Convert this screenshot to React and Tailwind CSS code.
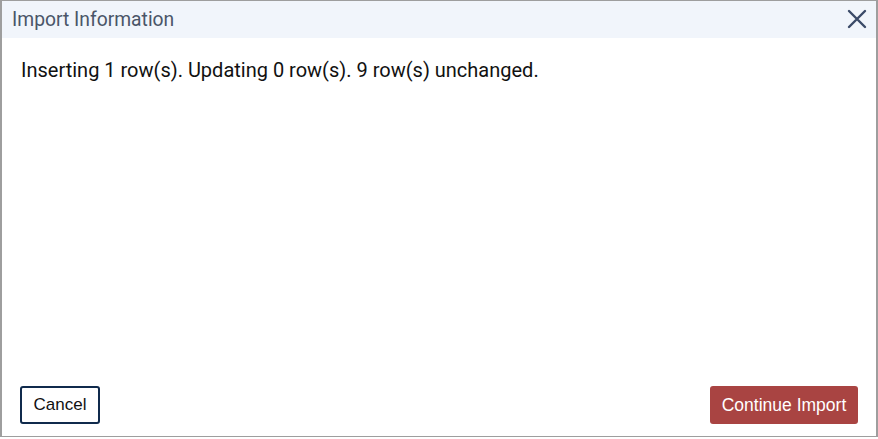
export default function App() {
  return (
    <div className="w-[878px] h-[439px] bg-white overflow-hidden">
      <div className="w-[878px] h-[437px] flex flex-col border-t border-b border-l-2 border-r-2 border-[#9e9e9e] bg-white">
        <div className="h-[37px] shrink-0 bg-[#f1f5fb] flex items-center justify-between pl-[10px] pr-[8px]">
          <span className="text-[19.3px] text-[#4a5568] font-['Roboto',sans-serif] leading-none">Import Information</span>
          <svg width="22" height="22" viewBox="0 0 22 22" className="mt-[-1px]">
            <path d="M3 3 L19 19 M19 3 L3 19" stroke="#3b4a68" strokeWidth="2.4" strokeLinecap="round" fill="none" />
          </svg>
        </div>
        <div className="flex-1 flex flex-col px-[19px]">
          <p className="mt-[20px] text-[20px] text-[#111] font-['Roboto',sans-serif] leading-[24px]">
            Inserting 1 row(s). Updating 0 row(s). 9 row(s) unchanged.
          </p>
          <div className="mt-auto mb-[12px] flex items-center justify-between pl-[-1px]">
            <button className="h-[38px] w-[80px] -ml-px border-2 border-[#102a4c] rounded-[3px] bg-white text-[17px] text-[#111] font-['Liberation_Sans',Arial,sans-serif]">
              Cancel
            </button>
            <button className="h-[38px] w-[148px] -mr-px rounded-[3px] bg-[#a94442] text-[17.5px] text-white font-['Liberation_Sans',Arial,sans-serif]">
              Continue Import
            </button>
          </div>
        </div>
      </div>
    </div>
  );
}
